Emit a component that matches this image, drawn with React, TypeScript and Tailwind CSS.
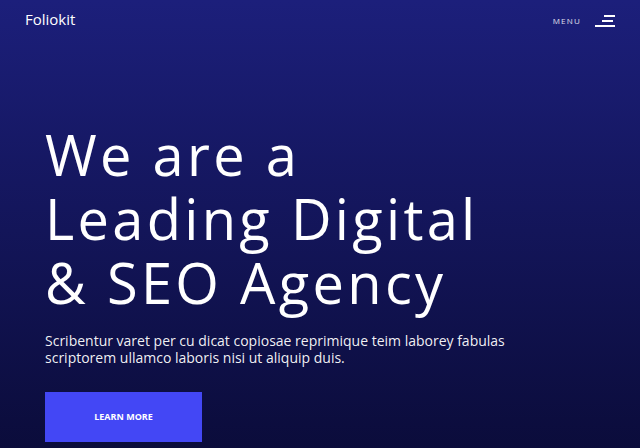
const MenuIcon = () => (
  <svg width="20" height="14" viewBox="0 0 20 14" className="block">
    <rect x="9" y="1" width="11" height="2" fill="white" />
    <rect x="7" y="6" width="11" height="2" fill="white" />
    <rect x="0" y="11" width="20" height="2" fill="white" />
  </svg>
);

export default function App() {
  return (
    <div
      className="w-[640px] h-[448px] overflow-hidden bg-gradient-to-b from-[#1c1f7b] to-[#0b0c3b] text-white"
      style={{ fontFamily: '"Open Sans", "Noto Sans", sans-serif' }}
    >
      <header className="flex items-center justify-between pl-[25px] pr-[25px] pt-[2px] h-[36px]">
        <div className="text-[15px] leading-none">Foliokit</div>
        <div className="flex items-center gap-[14px] pt-[3px]">
          <span className="text-[8px] tracking-[1.2px] font-medium text-white/85">MENU</span>
          <MenuIcon />
        </div>
      </header>

      <main className="pl-[45px] pt-[86px]">
        <h1 className="text-[56px] leading-[64px] font-normal tracking-[3.3px]">
          We are a
          <br />
          Leading Digital
          <br />
          &amp; SEO Agency
        </h1>
        <p className="mt-[18px] text-[14px] leading-[17px] text-white/95">
          Scribentur varet per cu dicat copiosae reprimique teim laborey fabulas
          <br />
          scriptorem ullamco laboris nisi ut aliquip duis.
        </p>
        <button className="mt-[26px] w-[157px] h-[50px] bg-[#4347f5] flex items-center justify-center text-[9px] font-bold text-white">
          LEARN MORE
        </button>
      </main>
    </div>
  );
}
